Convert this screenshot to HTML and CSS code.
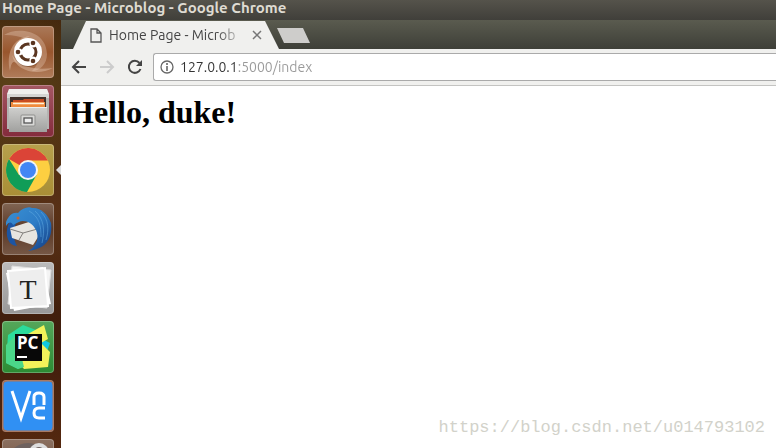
FILE: index.html
```
<!DOCTYPE html>
<html lang="en">
  <head>
    <meta charset="utf-8">
    <title>Home Page - Microblog</title>
    <link rel="stylesheet" href="styles.css">
  </head>
  <body>
    <header class="title-bar">Home Page - Microblog - Google Chrome</header>

    <div class="desktop">
      <nav class="launcher" aria-label="Launcher">
        <button class="app dash" aria-label="Dash">
          <svg viewBox="0 0 52 52">
            <path d="M2 9C14 1 44 3 45 28C45 38 38 45 30 45C46 30 32 8 2 9Z" fill="#f3dccb" opacity=".3"/>
            <path d="M8 45C4 28 10 12 28 10C14 18 12 30 20 40C14 38 10 30 8 45Z" fill="#f3dccb" opacity=".35"/>
            <path d="M51 42C36 50 14 46 10 29C18 42 34 44 51 42Z" fill="#f3dccb" opacity=".35"/>
            <circle cx="26" cy="27" r="14" fill="#4a2a16" opacity=".3"/>
            <circle cx="26" cy="26" r="14" fill="#fff"/>
            <circle cx="26" cy="26" r="8" fill="none" stroke="#5a3520" stroke-width="3"/>
            <g fill="#fff">
              <circle cx="17" cy="26" r="3.600"/>
              <circle cx="31" cy="18" r="3.600"/>
              <circle cx="31" cy="34" r="3.600"/>
            </g>
            <g fill="#5a3520">
              <circle cx="16" cy="26" r="2.300"/>
              <circle cx="31" cy="17" r="2.300"/>
              <circle cx="31" cy="35" r="2.300"/>
            </g>
          </svg>
        </button>
        <button class="app files" aria-label="Files">
          <svg viewBox="0 0 52 52">
            <defs>
              <linearGradient id="drawer" x2="0" y2="1">
                <stop stop-color="#d0d0ce"/>
                <stop offset="1" stop-color="#a0a09e"/>
              </linearGradient>
            </defs>
            <path d="M7 4H45L47 13V44H5V13Z" fill="#b4b4b2"/>
            <path d="M7 4H45L47 9H5Z" fill="#efefed"/>
            <path d="M5 9H47V13H5Z" fill="#d4d4d2"/>
            <path d="M8 12H44V24H8Z" fill="#40302a"/>
            <path d="M11 15H21L22 14H42V23H11Z" fill="#c84c22"/>
            <path d="M9 17H43V23H9Z" fill="#f08a3c"/>
            <path d="M11 18.500H42" stroke="#fff2dc" stroke-width="1.500"/>
            <path d="M7 22H45V47H7Z" fill="url(#drawer)"/>
            <path d="M7 22.500H45" stroke="#eee"/>
            <rect x="19" y="30" width="14" height="11" rx="1" fill="#d8d8d6" stroke="#8f8f8d"/>
            <rect x="22" y="33" width="8" height="5" fill="#eee" stroke="#555" stroke-width="1.300"/>
          </svg>
        </button>
        <button class="app chrome active" aria-label="Google Chrome">
          <svg viewBox="0 0 52 52">
            <circle cx="26" cy="26" r="22" fill="#fdcf41"/>
            <path d="M26 26L7 15A22 22 0 0 1 45.800 16.500H26Z" fill="#db4437"/>
            <path d="M7 15A22 22 0 0 0 25 48L34.500 31L26 26L17 31Z" fill="#109d58"/>
            <circle cx="26" cy="26" r="10" fill="#f4f4f4"/>
            <circle cx="26" cy="26" r="8" fill="#4286f4"/>
          </svg>
        </button>
        <button class="app mail" aria-label="Thunderbird">
          <svg viewBox="0 0 52 52">
            <defs>
              <linearGradient id="bird" x2="1" y2="1">
                <stop stop-color="#3a8fd2"/>
                <stop offset=".5" stop-color="#2d7cc6"/>
                <stop offset="1" stop-color="#12397f"/>
              </linearGradient>
            </defs>
            <path d="M12 14C5 19 2 32 8 40C10 42 13 43 15 43C11 36 11 28 14 20Z" fill="#1c55a3"/>
            <path d="M8 25L30 18L40 28L31 42L10 35Z" fill="#e7e5e0"/>
            <path d="M8 26L21 30L39 25M21 30L17 37" fill="none" stroke="#827f7b"/>
            <path d="M4 19C7 12 11 9 16 10C20 5 27 3 30 5C38 4 46 11 49 20C51 34 45 46 26 48C36 43 37 34 34 27C31 21 26 18 21 18C18 18 15 20 11 22C10 19 7 18 4 23Z" fill="url(#bird)"/>
            <path d="M33 8C42 16 43 27 40 40M27 8C38 14 39 24 39 34M39 9C47 17 47 27 44 37" fill="none" stroke="#65afe5" opacity=".5"/>
            <circle cx="16" cy="15" r="1.500" fill="#c86331"/>
          </svg>
        </button>
        <button class="app typora" aria-label="Typora">
          <svg viewBox="0 0 52 52">
            <path d="M10 4L49 8L45 46L6 42Z" fill="#f4f4f4" stroke="#ddd"/>
            <path d="M4 11L41 5L49 42L12 49Z" fill="#fff"/>
            <path d="M6 9L43 6L46 44L9 46Z" fill="#eee" stroke="#fff" stroke-width="2"/>
            <text x="26" y="37" text-anchor="middle" class="serif-mark">T</text>
          </svg>
        </button>
        <button class="app pycharm" aria-label="PyCharm">
          <svg viewBox="0 0 52 52">
            <path d="M6 14L21 4L34 9L30 40L16 48L4 42Z" fill="#2bdc9b"/>
            <path d="M36 16L48 22L43 36L30 40Z" fill="#11c8df"/>
            <path d="M26 13L42 4L46 18L39 22L48 31L46 46L22 48L15 40Z" fill="#f2f25a"/>
            <path d="M4 24L14 14L22 46L16 48L4 42Z" fill="#4bd789"/>
            <rect x="13" y="13" width="27" height="27" fill="#080808"/>
            <text x="15" y="28" class="pc-mark">PC</text>
            <path d="M15 36H25" stroke="#fff" stroke-width="2"/>
          </svg>
        </button>
        <button class="app vnc" aria-label="VNC Viewer">
          <svg viewBox="0 0 52 52" fill="none" stroke="#fff" stroke-width="3">
            <rect x="1" y="1" width="50" height="50" rx="4" fill="#3090f3" stroke="#a9745b" stroke-width="1"/>
            <path d="M10 11L19 38L28 11"/>
            <path d="M32 25V17Q32 13 37 13Q42 13 42 17V25M43 28H37Q32 28 32 33Q32 38 37 38H43"/>
          </svg>
        </button>
        <button class="app steam" aria-label="Steam">
          <svg viewBox="0 0 52 52">
            <circle cx="26" cy="26" r="22" fill="#6e625f"/>
            <circle cx="37" cy="14" r="10" fill="#ddd"/>
            <circle cx="37" cy="14" r="6" fill="#6e625f"/>
          </svg>
        </button>
      </nav>

      <main class="browser">
        <div class="tab-strip">
          <div class="tab">
            <svg class="page-icon" viewBox="0 0 12 15" fill="none" stroke="#555" stroke-width="1.300">
              <path d="M1 1H7L11 5V14H1ZM7 1V5H11"/>
            </svg>
            <span class="tab-title">Home Page - Microb</span>
            <button class="tab-close" aria-label="Close tab">
              <svg viewBox="0 0 10 10" stroke="#777" stroke-width="1.500">
                <path d="M1 1L9 9M9 1L1 9"/>
              </svg>
            </button>
          </div>
          <button class="new-tab" aria-label="New tab"></button>
        </div>

        <div class="toolbar">
          <button class="nav-btn" aria-label="Back">
            <svg viewBox="0 0 16 16" fill="none" stroke="#444" stroke-width="2">
              <path d="M15 8H2M8 2L2 8L8 14"/>
            </svg>
          </button>
          <button class="nav-btn" aria-label="Forward" disabled>
            <svg viewBox="0 0 16 16" fill="none" stroke="#ccc" stroke-width="2">
              <path d="M1 8H14M8 2L14 8L8 14"/>
            </svg>
          </button>
          <button class="nav-btn" aria-label="Reload">
            <svg viewBox="0 0 16 16" fill="none" stroke="#444" stroke-width="2">
              <path d="M13.500 10A6 6 0 1 1 12.500 4"/>
              <path d="M15 1V7H9Z" fill="#444" stroke="none"/>
            </svg>
          </button>
          <div class="address-bar">
            <svg class="info-icon" viewBox="0 0 14 14" fill="none" stroke="#666" stroke-width="1.300">
              <circle cx="7" cy="7" r="6"/>
              <path d="M7 6V11M7 3V5" stroke-width="1.600"/>
            </svg>
            <input class="address" type="text" value="127.0.0.1:5000/index" aria-label="Address">
          </div>
        </div>

        <section class="page">
          <h1>Hello, duke!</h1>
          <p class="watermark">https://blog.csdn.net/u014793102</p>
        </section>
      </main>
    </div>
  </body>
</html>
```
FILE: styles.css
```
:root {
  --chrome: #f0f0ee;
  --line: #c4c4c2;
}

* {
  box-sizing: border-box;
}

body {
  margin: 0;
  height: 100vh;
  display: flex;
  flex-direction: column;
  overflow: hidden;
  font-family: Ubuntu, "Noto Sans", sans-serif;
}

button {
  padding: 0;
  border: none;
  background: none;
}

svg {
  display: block;
}

.title-bar {
  height: 20px;
  padding-left: 2px;
  background: linear-gradient(#55534b, #403f3a);
  color: #dfdbd2;
  font-size: 15px;
  font-weight: bold;
  line-height: 16px;
}

.desktop {
  flex: 1;
  min-height: 0;
  display: flex;
}

/* launcher */
.launcher {
  width: 61px;
  padding: 6px 2px;
  display: flex;
  flex-direction: column;
  gap: 7px;
  overflow: hidden;
  background:
    radial-gradient(circle at 20% 15%, #5b4119, transparent 30%),
    radial-gradient(circle at 90% 45%, #593116, transparent 40%),
    linear-gradient(#3c1f0a, #4d2f10 25%, #48250f 50%, #3f1d0c 75%, #54280f);
}

.app {
  position: relative;
  flex: none;
  width: 52px;
  height: 52px;
  border-radius: 4px;
  box-shadow: inset 0 0 0 1px rgba(255, 255, 255, 0.25);
}

.dash {
  background: linear-gradient(#aa7959, #99562d 50%, #b07d5b);
}

.files {
  background: linear-gradient(#a45762, #842b3c);
}

.chrome {
  background: linear-gradient(#b7a14c, #a98e36);
}

.mail {
  background: linear-gradient(#816553, #5b3825 50%, #765846);
}

.typora {
  background: linear-gradient(#bbb, #989898);
}

.pycharm {
  background: linear-gradient(#55a75a, #2c8b34);
}

.vnc {
  background: #8d5438;
}

.steam {
  background: linear-gradient(#8b7060, #69442f);
}

.active::after {
  content: "";
  position: absolute;
  top: 21px;
  right: -7px;
  border: 5px solid transparent;
  border-left: none;
  border-right-color: #ddd;
}

.serif-mark {
  font: 28px "Liberation Serif", serif;
  fill: #222;
}

.pc-mark {
  font: bold 17px "Noto Sans", sans-serif;
  fill: #fff;
}

/* browser */
.browser {
  flex: 1;
  min-width: 0;
  display: flex;
  flex-direction: column;
}

.tab-strip {
  height: 29px;
  padding: 1px 0 0 12px;
  display: flex;
  background: linear-gradient(#5a5b4f, #3e3f38);
}

.tab {
  width: 206px;
  padding: 0 17px;
  display: flex;
  align-items: center;
  background: var(--chrome);
  clip-path: polygon(13px 0, 192px 0, 100% 100%, 0 100%);
}

.page-icon {
  width: 12px;
  height: 15px;
}

.tab-title {
  flex: 1;
  margin: 0 7px;
  color: #444;
  font-size: 14px;
  white-space: nowrap;
  mask-image: linear-gradient(to right, #000 108px, transparent 136px);
}

.tab-close,
.tab-close svg {
  width: 10px;
  height: 10px;
}

.new-tab {
  width: 33px;
  height: 15px;
  margin: 7px 0 0 -2px;
  background: #cecdcb;
  clip-path: polygon(0 0, 26px 0, 100% 100%, 7px 100%);
}

.toolbar {
  padding: 4px 0 4px 10px;
  display: flex;
  align-items: center;
  gap: 12px;
  background: var(--chrome);
  border-bottom: 1px solid var(--line);
}

.nav-btn,
.nav-btn svg {
  width: 16px;
  height: 16px;
}

.address-bar {
  flex: 1;
  height: 28px;
  padding-left: 6px;
  margin-left: -2px;
  display: flex;
  align-items: center;
  gap: 6px;
  background: #fff;
  border: 1px solid #aaa;
  border-right: none;
  border-radius: 3px 0 0 3px;
}

.info-icon {
  width: 14px;
  height: 14px;
}

/* host is dark, port and path are grey */
.address {
  flex: 1;
  min-width: 0;
  padding: 0;
  border: none;
  outline: none;
  color: transparent;
  font: 14px Ubuntu, "Noto Sans", sans-serif;
  background: linear-gradient(to right, #333 57px, #999 57px);
  background-clip: text;
}

.page {
  flex: 1;
  padding: 8px;
  display: flex;
  flex-direction: column;
  justify-content: space-between;
  background: #fff;
  font-family: "Liberation Serif", serif;
}

.page h1 {
  margin: 0;
  font-size: 32px;
  line-height: 36px;
}

.watermark {
  margin: 0 3px 0 0;
  color: #d2d2ca;
  font: 17px/24px "Liberation Mono", monospace;
  text-align: right;
}
```
